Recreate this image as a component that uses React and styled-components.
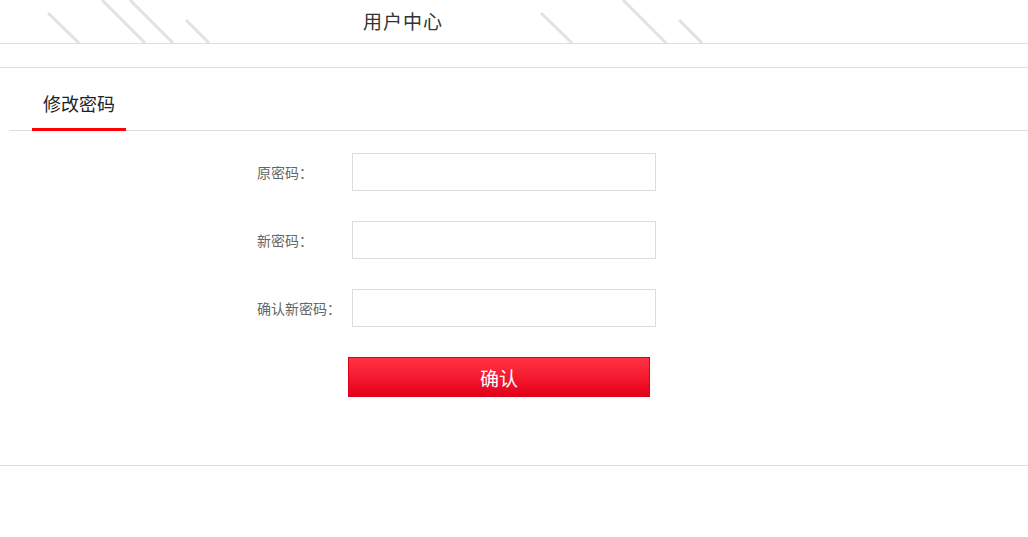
import React from "react";
import styled, { createGlobalStyle } from "styled-components";

const Global = createGlobalStyle`
  html, body { margin: 0; padding: 0; background: #fff; }
  body { font-family: "Noto Sans CJK SC", "Microsoft YaHei", sans-serif; }
  * { box-sizing: border-box; }
`;

const Header = styled.header`
  height: 44px;
  border-bottom: 1px solid #dddddd;
`;

const HeaderInner = styled.div`
  position: relative;
  width: 806px;
  height: 43px;
  display: flex;
  align-items: center;
  justify-content: center;
`;

const Deco = styled.svg`
  position: absolute;
  left: 0;
  top: 0;
  pointer-events: none;
`;

const Title = styled.h1`
  position: relative;
  margin: 0;
  font-size: 19px;
  font-weight: 400;
  color: #333;
  letter-spacing: 1px;
  line-height: 1;
  padding-bottom: 2px;
`;

const Main = styled.main`
  margin-top: 23px;
  border-top: 1px solid #dddddd;
  border-bottom: 1px solid #dddddd;
  padding-bottom: 68px;
`;

const Tabs = styled.nav`
  margin-left: 9px;
  height: 63px;
  border-bottom: 1px solid #dddddd;
  display: flex;
  align-items: flex-end;
  padding-left: 23px;
`;

const Tab = styled.div`
  width: 94px;
  height: 100%;
  display: flex;
  align-items: center;
  justify-content: center;
  font-size: 18px;
  color: #222;
  margin-bottom: -1px;
  border-bottom: 3px solid ${(p) => (p.$active ? "#ff0000" : "transparent")};
  padding-top: 9px;
`;

const Form = styled.form`
  padding-top: 22px;
  margin-left: 257px;
  display: grid;
  grid-template-columns: 95px 304px;
  row-gap: 30px;
  align-items: center;
`;

const Label = styled.label`
  font-size: 14px;
  color: #666;
`;

const Input = styled.input`
  width: 304px;
  height: 38px;
  border: 1px solid #dddddd;
  outline: none;
  padding: 0 8px;
  font-size: 14px;
`;

const ButtonRow = styled.div`
  grid-column: 1 / span 2;
  padding-left: 91px;
`;

const Button = styled.button`
  width: 302px;
  height: 40px;
  border: 1px solid #d8001c;
  background: linear-gradient(to bottom, #ff3344 0%, #f51a30 50%, #e3001a 100%);
  color: #fff;
  font-family: inherit;
  font-size: 19px;
  cursor: pointer;
  padding: 0;
`;

const lines = [
  [48, 13, 79, 43],
  [102, 0, 145, 43],
  [130, 0, 173, 43],
  [186, 20, 209, 43],
  [541, 13, 572, 43],
  [623, 0, 666, 43],
  [679, 20, 702, 43],
];

export default function App() {
  return (
    <>
      <Global />
      <Header>
        <HeaderInner>
          <Deco width="806" height="43" viewBox="0 0 806 43">
            {lines.map(([x1, y1, x2, y2], i) => (
              <line
                key={i}
                x1={x1}
                y1={y1}
                x2={x2}
                y2={y2}
                stroke="#e2e2e2"
                strokeWidth="3"
              />
            ))}
          </Deco>
          <Title>用户中心</Title>
        </HeaderInner>
      </Header>
      <Main>
        <Tabs>
          <Tab $active>修改密码</Tab>
        </Tabs>
        <Form onSubmit={(e) => e.preventDefault()}>
          <Label>原密码：</Label>
          <Input type="password" />
          <Label>新密码：</Label>
          <Input type="password" />
          <Label>确认新密码：</Label>
          <Input type="password" />
          <ButtonRow>
            <Button type="submit">确认</Button>
          </ButtonRow>
        </Form>
      </Main>
    </>
  );
}
